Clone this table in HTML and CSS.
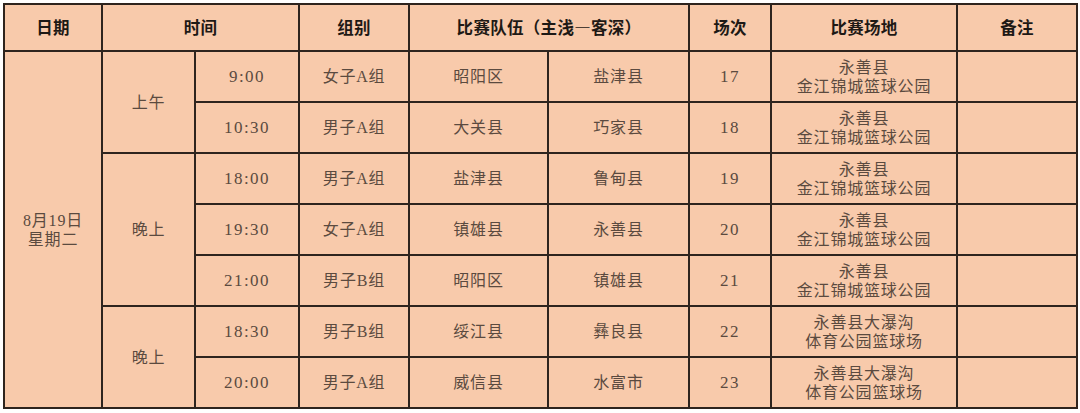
FILE: index.html
```html
<!DOCTYPE html>
<html lang="zh">
<head>
<meta charset="utf-8">
<link rel="stylesheet" href="styles.css">
</head>
<body>
<table class="sched">
  <colgroup>
    <col class="c1"><col class="c2"><col class="c3"><col class="c4"><col class="c5"><col class="c6"><col class="c7"><col class="c8"><col class="c9">
  </colgroup>
  <thead>
    <tr class="head">
      <th>日期</th>
      <th colspan="2">时间</th>
      <th>组别</th>
      <th colspan="2">比赛队伍（主浅—客深）</th>
      <th>场次</th>
      <th>比赛场地</th>
      <th>备注</th>
    </tr>
  </thead>
  <tbody>
    <tr>
      <td rowspan="7">8月19日<br>星期二</td>
      <td rowspan="2" class="period">上午</td>
      <td class="num">9:00</td>
      <td>女子A组</td>
      <td>昭阳区</td>
      <td>盐津县</td>
      <td class="num">17</td>
      <td>永善县<br>金江锦城篮球公园</td>
      <td></td>
    </tr>
    <tr>
      <td class="num">10:30</td>
      <td>男子A组</td>
      <td>大关县</td>
      <td>巧家县</td>
      <td class="num">18</td>
      <td>永善县<br>金江锦城篮球公园</td>
      <td></td>
    </tr>
    <tr>
      <td rowspan="3" class="period">晚上</td>
      <td class="num">18:00</td>
      <td>男子A组</td>
      <td>盐津县</td>
      <td>鲁甸县</td>
      <td class="num">19</td>
      <td>永善县<br>金江锦城篮球公园</td>
      <td></td>
    </tr>
    <tr>
      <td class="num">19:30</td>
      <td>女子A组</td>
      <td>镇雄县</td>
      <td>永善县</td>
      <td class="num">20</td>
      <td>永善县<br>金江锦城篮球公园</td>
      <td></td>
    </tr>
    <tr>
      <td class="num">21:00</td>
      <td>男子B组</td>
      <td>昭阳区</td>
      <td>镇雄县</td>
      <td class="num">21</td>
      <td>永善县<br>金江锦城篮球公园</td>
      <td></td>
    </tr>
    <tr>
      <td rowspan="2" class="period">晚上</td>
      <td class="num">18:30</td>
      <td>男子B组</td>
      <td>绥江县</td>
      <td>彝良县</td>
      <td class="num">22</td>
      <td>永善县大瀑沟<br>体育公园篮球场</td>
      <td></td>
    </tr>
    <tr>
      <td class="num">20:00</td>
      <td>男子A组</td>
      <td>威信县</td>
      <td>水富市</td>
      <td class="num">23</td>
      <td>永善县大瀑沟<br>体育公园篮球场</td>
      <td></td>
    </tr>
  </tbody>
</table>
</body>
</html>
```

FILE: styles.css
```css
html, body {
  margin: 0;
  padding: 0;
  background: #ffffff;
}
body {
  padding: 3px 0 0 3px;
}
.sched {
  border-collapse: collapse;
  table-layout: fixed;
  width: 1073px;
  background: #f8caab;
  font-family: "Liberation Serif", "Noto Sans CJK SC", serif;
  font-size: 16px;
  color: #5b4a3f;
  border: 2px solid #3a302a;
}
.c1 { width: 98px; }
.c2 { width: 93px; }
.c3 { width: 104px; }
.c4 { width: 110px; }
.c5 { width: 139px; }
.c6 { width: 141px; }
.c7 { width: 82px; }
.c8 { width: 186px; }
.c9 { width: 120px; }
.sched th, .sched td {
  border: 2px solid #2e241e;
  text-align: center;
  vertical-align: middle;
  padding: 0;
  line-height: 19px;
}
.sched th {
  font-family: "Noto Sans CJK SC", sans-serif;
  font-weight: 700;
  font-size: 16.5px;
  color: #1e1915;
  letter-spacing: 0.3px;
}
.head { height: 47px; }
.sched tbody tr { height: 51px; }
.sched td {
  letter-spacing: 0.8px;
}
.sched td.num {
  font-size: 17px;
  letter-spacing: 1.5px;
}
```
